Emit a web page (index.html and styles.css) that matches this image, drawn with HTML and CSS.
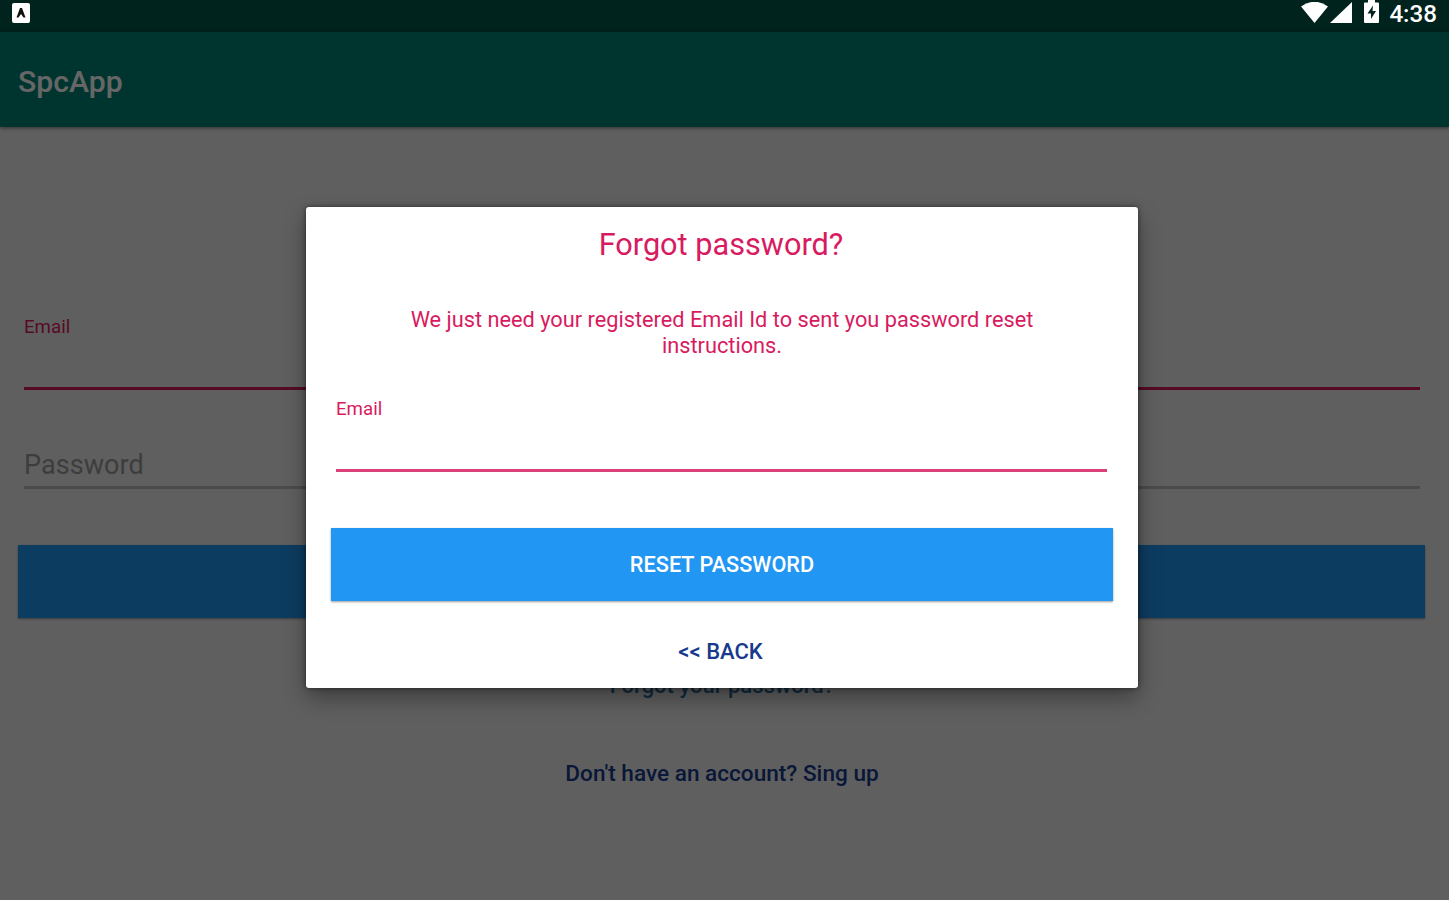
FILE: index.html
```
<!DOCTYPE html>
<html lang="en">
<head>
    <meta charset="UTF-8">
    <meta name="viewport" content="width=device-width, initial-scale=1.0">
    <title>SpcApp</title>
    <link rel="stylesheet" href="styles.css">
</head>
<body>
    <div class="screen">
        <div class="status-bg"></div>
        <header class="app-bar">
            <h1 class="app-title">SpcApp</h1>
        </header>
        <main class="login">
            <div class="field email-field">
                <span class="field-label">Email</span>
            </div>
            <div class="field password-field">
                <span class="field-hint">Password</span>
            </div>
            <div class="button login-button"></div>
            <div class="forgot-link">Forgot your password?</div>
            <div class="signup-link">Don't have an account? Sing up</div>
        </main>
    </div>

    <div class="overlay">
        <div class="dialog">
            <h2 class="dialog-title">Forgot password?</h2>
            <p class="dialog-text">We just need your registered Email Id to sent you password reset instructions.</p>
            <div class="field dialog-field">
                <span class="field-label">Email</span>
            </div>
            <div class="button reset-button"><span>RESET PASSWORD</span></div>
            <div class="back-link">&lt;&lt; BACK</div>
        </div>
    </div>

    <div class="status-bar">
        <svg class="icon-app" width="18" height="20" viewBox="0 0 18 20">
            <rect x="0" y="0" width="18" height="20" rx="2" fill="#fff"/>
            <path d="M4.500 14.500L8 5h2l3.500 9.500h-2L9 11l-2.500 3.500z" fill="#111"/>
        </svg>
        <div class="status-right">
            <svg class="icon-wifi" width="27" height="21" viewBox="0 0 27 21">
                <path d="M0 4.500Q13.500-5 27 4.500L13.500 21z" fill="#fff"/>
            </svg>
            <svg class="icon-signal" width="22" height="21" viewBox="0 0 22 21">
                <path d="M22 0v21H0z" fill="#fff"/>
            </svg>
            <svg class="icon-battery" width="15" height="23" viewBox="0 0 15 23">
                <path d="M4 0h7v2.500h3q1 0 1 1V22q0 1-1 1H1q-1 0-1-1V3.500q0-1 1-1h3z" fill="#fff"/>
                <path d="M9 5.500L3.500 13.500H7V19l5-8H8.500z" fill="#00231e"/>
            </svg>
            <span class="clock">4:38</span>
        </div>
    </div>
</body>
</html>
```
FILE: styles.css
```
* {
    box-sizing: border-box;
}
body {
    margin: 0;
    height: 900px;
    overflow: hidden;
    font-family: Roboto, "Liberation Sans", sans-serif;
    background-color: #eeeeee;
}
.screen {
    height: 900px;
    display: flex;
    flex-direction: column;
}
.status-bg {
    height: 32px;
    background-color: #00574b;
}
.app-bar {
    height: 95px;
    padding: 0 18px 0;
    display: flex;
    align-items: center;
    background-color: #008577;
    box-shadow: 0 1px 4px rgba(0, 0, 0, 0.5);
}
.app-title {
    margin: 3px 0 0;
    font-size: 30.2px;
    font-weight: 500;
    color: #fff;
}
.login {
    padding: 188px 24px 0;
    display: flex;
    flex-direction: column;
}
.field {
    border-bottom: 3px solid #d81b60;
}
.field-label {
    display: block;
    font-size: 18.7px;
    line-height: 24px;
    color: #d81b60;
}
.email-field {
    height: 75px;
    margin-right: 5px;
}
.password-field {
    margin: 57px 5px 0 0;
    height: 42px;
    border-bottom: 3px solid #bbb;
}
.field-hint {
    display: block;
    font-size: 27.1px;
    line-height: 36px;
    color: #999;
}
.button {
    height: 73px;
    display: flex;
    align-items: center;
    justify-content: center;
    background-color: #2196f3;
    box-shadow: 0 1px 2px rgba(0, 0, 0, 0.4);
    font-size: 21.7px;
    font-weight: 500;
    color: #fff;
}
.login-button {
    margin: 56px 0 0 -6px;
}
.forgot-link,
.signup-link {
    margin-right: 5px;
    font-weight: 500;
    font-size: 22px;
    line-height: 28px;
    text-align: center;
}
.forgot-link {
    margin-top: 54px;
    color: #2a6f9e;
}
.signup-link {
    margin-top: 60px;
    font-size: 22.6px;
    color: #173a8c;
}

/* Dialog */
.overlay {
    position: absolute;
    top: 0;
    left: 0;
    width: 100%;
    height: 900px;
    padding: 207px 311px 0 306px;
    background-color: rgba(0, 0, 0, 0.6);
}
.dialog {
    height: 481px;
    padding: 18px 25px 0;
    border-radius: 3px;
    background-color: #fff;
    box-shadow: 0 0 5px rgba(0, 0, 0, 0.5), 0 10px 22px rgba(0, 0, 0, 0.35);
}
.dialog-title {
    margin: 0 2px 0 0;
    font-size: 30.7px;
    line-height: 40px;
    font-weight: 400;
    text-align: center;
    color: #d81b60;
}
.dialog-text {
    margin: 42px 70px 0;
    font-size: 21.75px;
    line-height: 26px;
    text-align: center;
    color: #d81b60;
}
.dialog-field {
    height: 75px;
    margin: 38px 6px 0 5px;
    border-bottom-color: #dc4078;
}
.reset-button {
    margin-top: 56px;
}
.back-link {
    margin: 37px 3px 0 0;
    font-size: 22px;
    font-weight: 500;
    line-height: 28px;
    text-align: center;
    color: #173a8c;
}

/* Status icons stay above the dimmed screen */
.status-bar {
    position: absolute;
    top: 0;
    left: 0;
    width: 100%;
    height: 32px;
    padding: 0 12px;
    display: flex;
    justify-content: space-between;
    align-items: flex-start;
}
.icon-app {
    margin-top: 3px;
}
.status-right {
    display: flex;
}
.icon-wifi {
    margin-top: 2px;
}
.icon-signal {
    margin: 2px 0 0 2px;
}
.icon-battery {
    margin-left: 12px;
}
.clock {
    margin-left: 10px;
    font-size: 24.2px;
    font-weight: 500;
    line-height: 29px;
    color: #fff;
}
```
